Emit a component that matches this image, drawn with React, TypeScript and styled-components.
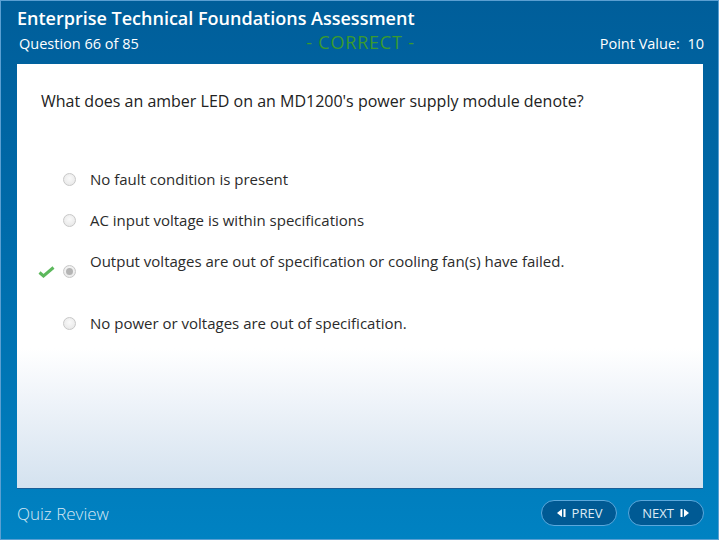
import React from "react";
import styled, { createGlobalStyle } from "styled-components";

const GlobalStyle = createGlobalStyle`
  html, body {
    margin: 0;
    padding: 0;
    background: #0070b0;
  }
  * {
    box-sizing: border-box;
  }
`;

const options = [
  { label: "No fault condition is present" },
  { label: "AC input voltage is within specifications" },
  {
    label: "Output voltages are out of specification or cooling fan(s) have failed.",
    selected: true,
    correct: true,
  },
  { label: "No power or voltages are out of specification." },
];

const App = () => {
  return (
    <>
      <GlobalStyle />
      <StyledFrame>
        <StyledHeader>
          <StyledTitle>Enterprise Technical Foundations Assessment</StyledTitle>
          <StyledSubRow>
            <StyledSubText>Question 66 of 85</StyledSubText>
            <StyledResult>- CORRECT -</StyledResult>
            <StyledSubText $right>Point Value:&nbsp; 10</StyledSubText>
          </StyledSubRow>
        </StyledHeader>
        <StyledPanel>
          <StyledQuestion>
            What does an amber LED on an MD1200's power supply module denote?
          </StyledQuestion>
          <StyledOptions>
            {options.map((o) => (
              <StyledOption key={o.label} $tall={o.selected}>
                <StyledMark>
                  {o.correct && (
                    <svg width="17" height="12" viewBox="0 0 17 12">
                      <path
                        d="M1.5 6.5 L5.5 10 L15.5 1.5"
                        fill="none"
                        stroke="#5cb85c"
                        strokeWidth="3"
                        strokeLinejoin="miter"
                      />
                    </svg>
                  )}
                </StyledMark>
                <StyledRadio $selected={o.selected} />
                <StyledLabel>{o.label}</StyledLabel>
              </StyledOption>
            ))}
          </StyledOptions>
        </StyledPanel>
        <StyledFooter>
          <StyledFooterTitle>Quiz Review</StyledFooterTitle>
          <StyledNav>
            <StyledNavButton>
              <StyledArrow viewBox="0 0 10 10">
                <path d="M6 1 L1 5 L6 9 Z" fill="#fff" />
                <rect x="7.5" y="1" width="2" height="8" fill="#fff" />
              </StyledArrow>
              PREV
            </StyledNavButton>
            <StyledNavButton>
              NEXT
              <StyledArrow viewBox="0 0 10 10">
                <rect x="0.5" y="1" width="2" height="8" fill="#fff" />
                <path d="M4 1 L9 5 L4 9 Z" fill="#fff" />
              </StyledArrow>
            </StyledNavButton>
          </StyledNav>
        </StyledFooter>
      </StyledFrame>
    </>
  );
};

const StyledFrame = styled.div`
  width: 719px;
  height: 540px;
  display: flex;
  flex-direction: column;
  border: 1px solid #5b9fd2;
  background: linear-gradient(#005e9a 0%, #006aa9 40%, #0082c2 100%);
  font-family: "Open Sans", "Noto Sans", sans-serif;
  overflow: hidden;
`;

const StyledHeader = styled.div`
  height: 63px;
  padding: 5px 14px 0 16px;
  display: flex;
  flex-direction: column;
`;

const StyledTitle = styled.div`
  color: #ffffff;
  font-size: 18px;
  font-weight: 600;
  line-height: 24px;
`;

const StyledSubRow = styled.div`
  display: grid;
  grid-template-columns: 1fr auto 1fr;
  align-items: center;
  margin-top: 3px;
`;

const StyledSubText = styled.div<{ $right?: boolean }>`
  color: #ffffff;
  font-size: 14.5px;
  line-height: 22px;
  padding-left: 2px;
  text-align: ${(p) => (p.$right ? "right" : "left")};
`;

const StyledResult = styled.div`
  color: #3a9a2e;
  font-size: 18px;
  line-height: 18px;
  letter-spacing: 0.8px;
  margin-top: -4px;
`;

const StyledPanel = styled.div`
  margin: 0 15px 0 16px;
  height: 425px;
  background: linear-gradient(#ffffff 0%, #ffffff 67%, #eef3f9 80%, #d4e2ef 100%);
  border-bottom: 1px solid #1a5f98;
  padding: 27px 24px 0 24px;
`;

const StyledQuestion = styled.div`
  color: #222222;
  font-size: 16px;
  line-height: 20px;
`;

const StyledOptions = styled.div`
  margin-top: 58px;
  display: flex;
  flex-direction: column;
  gap: 21px;
`;

const StyledOption = styled.div<{ $tall?: boolean }>`
  display: flex;
  align-items: center;
  min-height: ${(p) => (p.$tall ? "41px" : "20px")};
  margin-left: -3px;
`;

const StyledMark = styled.div`
  width: 20px;
  height: 14px;
  margin-right: 5px;
  display: flex;
  align-items: center;
`;

const StyledRadio = styled.span<{ $selected?: boolean }>`
  width: 13px;
  height: 13px;
  border-radius: 50%;
  border: 1px solid #c8c8c8;
  background: radial-gradient(circle at 50% 40%, #fafafa 0%, #e4e4e4 100%);
  margin-right: 14px;
  flex-shrink: 0;
  position: relative;
  &::after {
    content: "";
    display: ${(p) => (p.$selected ? "block" : "none")};
    position: absolute;
    left: 2px;
    top: 2px;
    width: 7px;
    height: 7px;
    border-radius: 50%;
    background: #b4b4b4;
  }
`;

const StyledLabel = styled.div`
  color: #2b2b2b;
  font-size: 15px;
  line-height: 20px;
  align-self: flex-start;
`;

const StyledFooter = styled.div`
  flex: 1;
  display: flex;
  align-items: center;
  justify-content: space-between;
  padding: 0 14px 2px 16px;
`;

const StyledFooterTitle = styled.div`
  color: #d6e8f5;
  font-size: 17px;
  font-weight: 300;
`;

const StyledNav = styled.div`
  display: flex;
  gap: 11px;
`;

const StyledNavButton = styled.button`
  width: 76px;
  height: 26px;
  border-radius: 13px;
  border: 1px solid #5aa8dc;
  background: #005a94;
  color: #dceaf5;
  font-family: "Open Sans", "Noto Sans", sans-serif;
  font-size: 13px;
  display: flex;
  align-items: center;
  justify-content: center;
  gap: 6px;
  padding: 0;
  cursor: pointer;
`;

const StyledArrow = styled.svg`
  width: 10px;
  height: 10px;
`;

export default App;
